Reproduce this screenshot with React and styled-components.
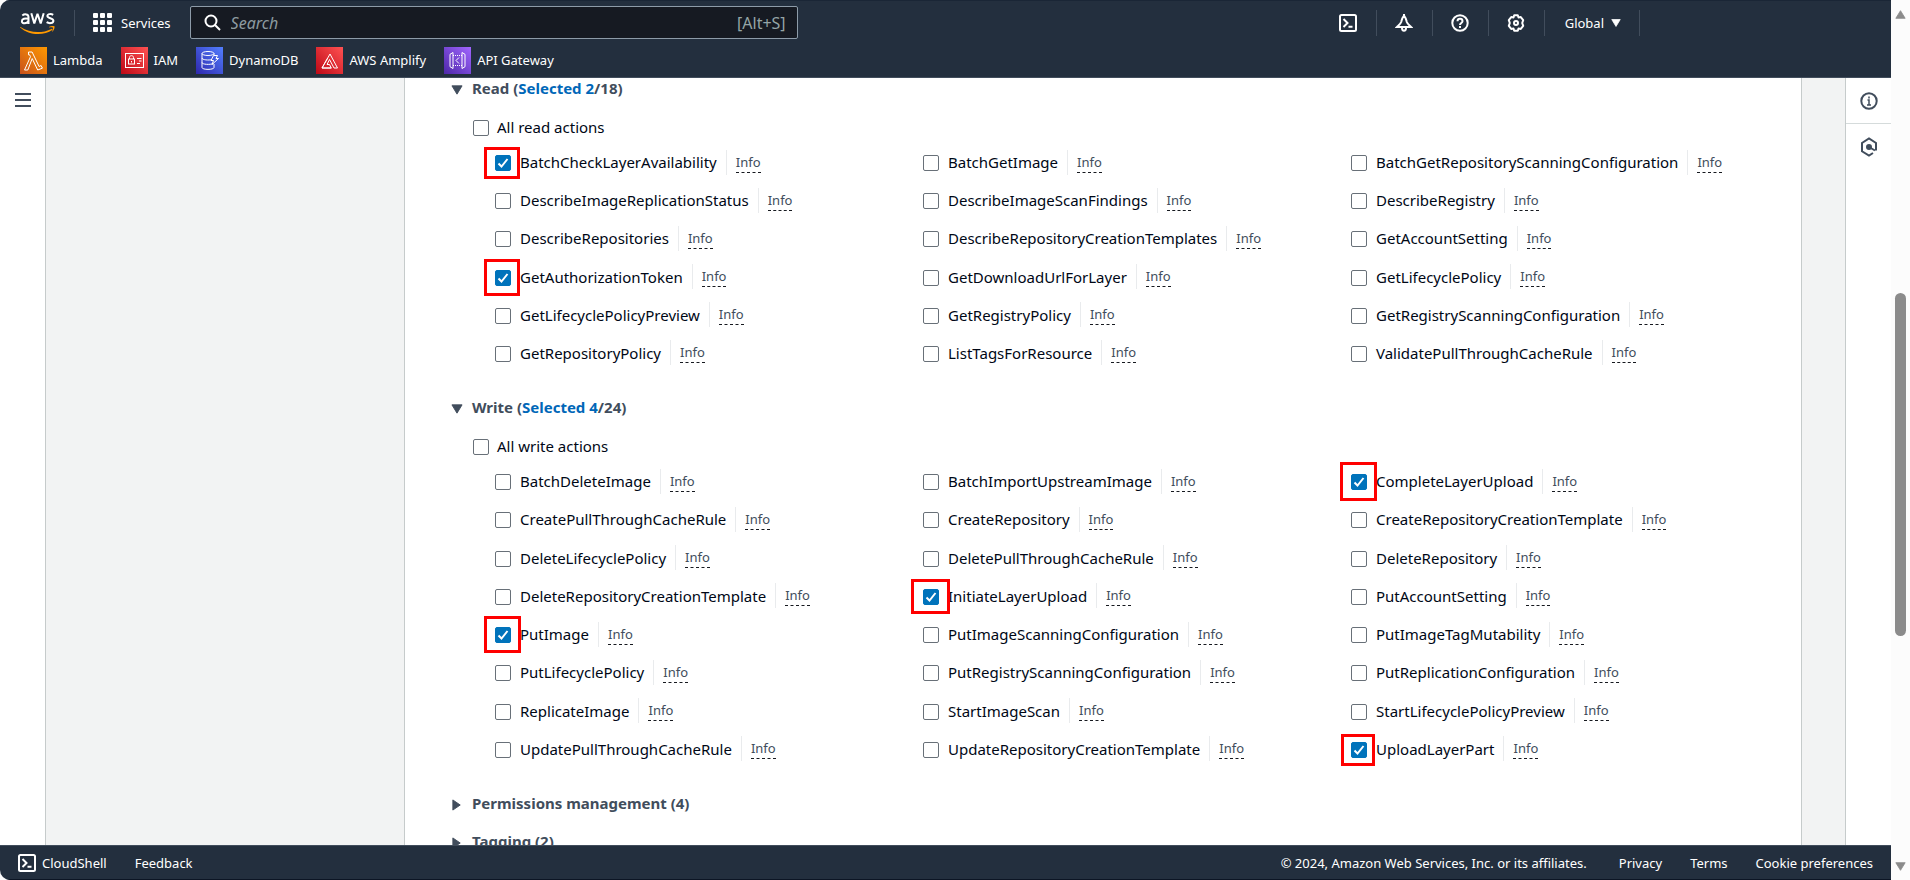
import React from "react";
import styled, { createGlobalStyle } from "styled-components";

const Global = createGlobalStyle`
  *, *::before, *::after { box-sizing: border-box; }
  body { margin: 0; background: #fdfdfd; font-family: "Noto Sans", "Open Sans", sans-serif; color: #000716; overflow: hidden; }
  button, input, a { font: inherit; color: inherit; }
  a { text-decoration: none; }
`;

const Window = styled.div`
  display: grid;
  grid-template-columns: minmax(0, 1fr) 19px;
  height: 100vh;
`;

const Page = styled.div`
  display: flex;
  flex-direction: column;
  min-width: 0;
  height: 100vh;
  border-radius: 10px 0 0 10px;
  overflow: hidden;
`;

const Header = styled.header`
  flex: none;
  height: 78px;
  background: #232f3e;
  color: #fff;
  border-top: 1px solid #1a2636;
  border-bottom: 1px solid #414d5c;
  display: flex;
  flex-direction: column;
`;

const TopBar = styled.div`
  display: flex;
  align-items: center;
  height: 43px;
  padding-left: 20px;
`;

const Divider = styled.span`
  width: 1px;
  height: 26px;
  background: #414d5c;
`;

const PlainButton = styled.button`
  display: flex;
  align-items: center;
  gap: 9px;
  padding: 0;
  border: 0;
  background: none;
  font-size: 13px;
  line-height: 20px;
  cursor: pointer;
`;

const LogoLink = styled.a`
  display: block;
  height: 24px;
  margin-right: 18px;
`;

const ServicesButton = styled(PlainButton)`
  margin: 0 19px 0 18px;
`;

const SearchBox = styled.label`
  display: flex;
  align-items: center;
  gap: 8px;
  width: 608px;
  height: 33px;
  padding: 0 11px 0 13px;
  background: #161a22;
  border: 1px solid #8d9ba8;
  border-radius: 2px;
  color: #95a5a6;
  font-size: 16px;
`;

const SearchInput = styled.input`
  flex: 1;
  min-width: 0;
  border: 0;
  outline: 0;
  background: none;
  &::placeholder { color: #8d9ba0; font-style: italic; opacity: 1; }
`;

const Tools = styled.div`
  display: flex;
  align-items: center;
  margin-left: auto;
  margin-right: 251px;
`;

const ToolButton = styled(PlainButton)`
  justify-content: center;
  width: 55px;
  height: 26px;
`;

const RegionButton = styled(PlainButton)`
  gap: 7px;
  padding: 0 18px 0 20px;
`;

const Favorites = styled.nav`
  display: flex;
  align-items: center;
  gap: 18px;
  padding-left: 20px;
  height: 32px;
`;

const Favorite = styled.a`
  display: flex;
  align-items: center;
  gap: 6px;
  font-size: 13px;
  line-height: 20px;
`;

const Body = styled.div`
  flex: 1;
  min-height: 0;
  display: grid;
  grid-template-columns: 46px minmax(0, 1fr) 46px;
  background: #f2f3f3;
`;

const LeftRail = styled.aside`
  background: #fff;
  border-right: 1px solid #c6cbcb;
  padding: 14px 0 0 15px;
`;

const RightRail = styled.aside`
  background: #fff;
  border-left: 1px solid #c6cbcb;
`;

const RailButton = styled(PlainButton)`
  justify-content: center;
  width: 100%;
  height: 46px;
  color: #414d5c;
  border-bottom: ${(p) => (p.$ruled ? "1px solid #d5dbdb" : "0")};
`;

const Panel = styled.main`
  margin: 0 43px 0 358px;
  padding: 0 46px;
  background: #fff;
  border: solid #c6cbcb;
  border-width: 0 1px;
  overflow: hidden;
`;

const Section = styled.section`
  padding-bottom: 25px;
`;

const SectionHeading = styled.h3`
  margin: 0;
  font-size: 15px;
  line-height: 20px;
  font-weight: 700;
  color: #414d5c;
`;

const Toggle = styled.button`
  display: flex;
  align-items: center;
  gap: 9px;
  padding: 0;
  border: 0;
  background: none;
  cursor: pointer;
  svg { margin-top: 3px; }
`;

const Selected = styled.span`
  color: #0067b8;
`;

const CheckLabel = styled.label`
  display: flex;
  align-items: center;
  gap: 9px;
  font-size: 15px;
  line-height: 20px;
`;

const AllActions = styled(CheckLabel)`
  padding: 19px 0 6px 22px;
  gap: 8px;
`;

const Checkbox = styled.input`
  appearance: none;
  flex: none;
  width: 16px;
  height: 16px;
  margin: 2px 0 0;
  border: 1px solid #687078;
  border-radius: 2px;
  background: #fff;
  &:checked {
    border-color: #0073bb;
    background: #0073bb url("data:image/svg+xml,%3Csvg xmlns='http://www.w3.org/2000/svg' viewBox='0 0 14 14'%3E%3Cpath d='M2.5 7.5l3 3 6-7.5' fill='none' stroke='white' stroke-width='2'/%3E%3C/svg%3E") center / 14px 14px no-repeat;
  }
`;

const ActionGrid = styled.ul`
  display: grid;
  grid-template-columns: repeat(3, 428px);
  grid-auto-rows: 1fr;
  min-height: ${(p) => p.$height}px;
  margin: 0;
  padding: 0 0 0 44px;
  list-style: none;
`;

const ActionItem = styled.li`
  position: relative;
  display: flex;
  align-items: center;
`;

const InfoCell = styled.span`
  display: flex;
  align-items: center;
  height: 25px;
  margin-left: 9px;
  padding-left: 9px;
  border-left: 1px solid #e9ebed;
`;

const InfoLink = styled.a`
  color: #414d5c;
  font-size: 13px;
  line-height: 20px;
  border-bottom: 1px dashed #16191f;
`;

const Highlight = styled.span`
  position: absolute;
  left: ${(p) => 7 - Math.floor(p.$w / 2)}px;
  top: ${(p) => 20 - Math.ceil(p.$h / 2)}px;
  width: ${(p) => p.$w}px;
  height: ${(p) => p.$h}px;
  border: 3px solid #f00;
  pointer-events: none;
`;

const Collapsed = styled.div`
  padding-bottom: 18px;
`;

const Footer = styled.footer`
  flex: none;
  height: 35px;
  display: flex;
  align-items: center;
  gap: 28px;
  padding: 0 18px;
  background: #232f3e;
  border-top: 1px solid #414d5c;
  border-bottom: 1px solid #0c1524;
  color: #fff;
  font-size: 13px;
  line-height: 20px;
`;

const FooterButton = styled(PlainButton)`
  gap: 6px;
`;

const Legal = styled.div`
  display: flex;
  gap: 28px;
  margin-left: auto;
`;

const Copyright = styled.span`
  margin-right: 4px;
`;

const ScrollTrack = styled.div`
  display: flex;
  flex-direction: column;
  align-items: center;
  background: #fcfcfc;
  padding: 9px 0 8px;
`;

const ScrollThumb = styled.div`
  width: 11px;
  height: 343px;
  margin-top: 273px;
  margin-bottom: auto;
  border-radius: 6px;
  background: #8b8b8b;
`;

function Caret({ dir = "down", color = "#414d5c", w = 12 }) {
  const d = { down: "M1 2h11L6.500 11z", right: "M2 1v11L10 6.500z", up: "M1 11h11L6.500 2z" }[dir];
  return (
    <svg width={w} height={w} viewBox="0 0 13 13" aria-hidden="true">
      <path d={d} fill={color} stroke={color} strokeLinejoin="round" />
    </svg>
  );
}

function AwsLogo() {
  return (
    <svg width="36" height="24" viewBox="0 0 36 24" role="img" aria-label="aws">
      <g fill="none" stroke="#fff" strokeWidth="2">
        <path d="M2.300 4.500c2-1.600 6.200-1.800 6.200 1.500v7M8.500 7.800C5 7 1.900 7.800 1.900 10.200c0 3 5.200 2.900 6.600-.6" />
        <path d="M11.300 2.200l3 10.200 3.200-9.600 3.200 9.600 3-10.200" strokeLinejoin="bevel" />
        <path d="M33.200 3.800c-1.900-1.100-5.800-1.100-5.800 1.200 0 2.700 6 1.700 6 4.700 0 2.900-4.400 3-6.800 1.500" />
      </g>
      <path d="M.5 16c9.500 6.500 22 6.400 31 1.900.9-.4 1.500.5.700 1.100C24.500 24.600 9.200 25 .2 16.500c-.4-.4 0-.8.3-.5z" fill="#f90" />
      <path d="M29 15.900c1.700-1.200 5-1.200 5.500-.6.400.7-.4 4.100-1.900 5.300-.3.200-.6.100-.5-.2.400-1 1.200-3.100.8-3.700-.5-.6-2.700-.4-3.700-.3-.3 0-.4-.3-.2-.5z" fill="#f90" />
    </svg>
  );
}

function GridIcon() {
  return (
    <svg width="19" height="19" viewBox="0 0 19 19" fill="#fff" aria-hidden="true">
      {[0, 7, 14].map((y) => [0, 7, 14].map((x) => <rect key={`${x}-${y}`} x={x} y={y} width="5" height="5" rx="1" />))}
    </svg>
  );
}

function ShellIcon({ size = 18 }) {
  return (
    <svg width={size} height={size} viewBox="0 0 18 18" fill="none" stroke="currentColor" strokeWidth="2" aria-hidden="true">
      <rect x="1" y="1" width="16" height="16" rx="1.500" />
      <path d="M4.500 5l4 4-4 4M9.500 12.700h4" />
    </svg>
  );
}

const toolIcons = {
  Notifications: <path d="M9 1.500C7 4 6.800 6 6.200 8 5.500 10 3.500 11.500 2 13h14c-1.500-1.500-3.500-3-4.200-5C11.200 6 11 4 9 1.500zM9 0v3M7 14c0 3.500 4 3.500 4 0" />,
  Help: (
    <>
      <circle cx="9" cy="9" r="7.700" />
      <path d="M6.500 7.200c0-3.200 5-3.200 5 0 0 1.800-2.500 1.800-2.500 3.800M9 12v2" />
    </>
  ),
  Settings: (
    <>
      <path d="M7.200 1.300h3.600l.7 2.200 2.300-.4 2.400 3-1 2.900 1 2.900-2.400 3-2.300-.4-.7 2.200H7.200l-.7-2.200-2.300.4-2.400-3 1-2.900-1-2.900 2.400-3 2.300.4z" strokeLinejoin="round" />
      <circle cx="9" cy="9" r="2" />
    </>
  ),
};

const art = {
  lambda: <path d="M8.500 5h3.600l7 14.500 2-1 1.300 2.700-4.700 1.800-5.500-11.500L7.800 23H4.500l6-13.300-.9-1.900H8.500z" />,
  iam: (
    <>
      <rect x="4.500" y="6.500" width="18" height="14" />
      <rect x="7.500" y="12" width="6" height="5" />
      <path d="M8.500 12v-1.500c0-2.500 4-2.500 4 0V12M10.500 14v1.500M16 11.500h4.500M18 14h2.500M16 16.500h3" />
    </>
  ),
  dynamo: (
    <>
      <ellipse cx="12" cy="6.500" rx="6" ry="2" />
      <path d="M6 6.500v14c0 2.500 12 2.500 12 0V17M6 11c0 2 7 2.500 10 1.500M6 15.500c0 2 8 2.500 11.500 1M18 6.500V8M17.500 8.500h4l-1.500 3h2.500l-6.500 6 1.500-4h-2.500z" />
    </>
  ),
  amplify: <path d="M6 21l8-14 7.500 14H18L13.500 12.500 11 17.500h2.500l1.700 3.500zM11.700 11L6 21h9.500" />,
  api: (
    <>
      <path d="M9 5.500v16l-3-1.800V7.300zM18 5.500v16l3-1.800V7.300zM15 10.500L12 13.500l3 3" />
      <path d="M9 8.500h9M9 18.500h9" strokeDasharray="1 1" />
    </>
  ),
};

function ServiceIcon({ name, from, to }) {
  return (
    <svg width="27" height="27" viewBox="0 0 27 27" aria-hidden="true">
      <defs>
        <linearGradient id={name} x1="0" y1="1" x2="1" y2="0">
          <stop offset="0" stopColor={from} />
          <stop offset="1" stopColor={to} />
        </linearGradient>
      </defs>
      <rect width="27" height="27" fill={`url(#${name})`} />
      <g fill="none" stroke="#fff" strokeWidth="1">{art[name]}</g>
    </svg>
  );
}

const favorites = [
  ["lambda", "Lambda", "#c8511b", "#ff9900"],
  ["iam", "IAM", "#bd0816", "#ff5252"],
  ["dynamo", "DynamoDB", "#2e27ad", "#527fff"],
  ["amplify", "AWS Amplify", "#bd0816", "#ff5252"],
  ["api", "API Gateway", "#4d27a8", "#a166ff"],
];

const readActions = [
  "BatchCheckLayerAvailability", "BatchGetImage", "BatchGetRepositoryScanningConfiguration",
  "DescribeImageReplicationStatus", "DescribeImageScanFindings", "DescribeRegistry",
  "DescribeRepositories", "DescribeRepositoryCreationTemplates", "GetAccountSetting",
  "GetAuthorizationToken", "GetDownloadUrlForLayer", "GetLifecyclePolicy",
  "GetLifecyclePolicyPreview", "GetRegistryPolicy", "GetRegistryScanningConfiguration",
  "GetRepositoryPolicy", "ListTagsForResource", "ValidatePullThroughCacheRule",
];

const writeActions = [
  "BatchDeleteImage", "BatchImportUpstreamImage", "CompleteLayerUpload",
  "CreatePullThroughCacheRule", "CreateRepository", "CreateRepositoryCreationTemplate",
  "DeleteLifecyclePolicy", "DeletePullThroughCacheRule", "DeleteRepository",
  "DeleteRepositoryCreationTemplate", "InitiateLayerUpload", "PutAccountSetting",
  "PutImage", "PutImageScanningConfiguration", "PutImageTagMutability",
  "PutLifecyclePolicy", "PutRegistryScanningConfiguration", "PutReplicationConfiguration",
  "ReplicateImage", "StartImageScan", "StartLifecyclePolicyPreview",
  "UpdatePullThroughCacheRule", "UpdateRepositoryCreationTemplate", "UploadLayerPart",
];

/* Width and height of the frame drawn round each chosen tick box. */
const chosen = {
  BatchCheckLayerAvailability: [36, 32],
  GetAuthorizationToken: [36, 37],
  CompleteLayerUpload: [37, 39],
  InitiateLayerUpload: [39, 35],
  PutImage: [37, 37],
  UploadLayerPart: [34, 32],
};

function ActionSection({ title, selected, total, all, actions, height }) {
  return (
    <Section>
      <SectionHeading>
        <Toggle aria-expanded="true">
          <Caret />
          <span>{title} (<Selected>Selected {selected}</Selected>/{total})</span>
        </Toggle>
      </SectionHeading>
      <AllActions><Checkbox type="checkbox" />{all}</AllActions>
      <ActionGrid $height={height}>
        {actions.map((name) => (
          <ActionItem key={name}>
            <CheckLabel>
              <Checkbox type="checkbox" defaultChecked={name in chosen} />
              {name}
            </CheckLabel>
            <InfoCell><InfoLink href="#info">Info</InfoLink></InfoCell>
            {name in chosen && <Highlight $w={chosen[name][0]} $h={chosen[name][1]} />}
          </ActionItem>
        ))}
      </ActionGrid>
    </Section>
  );
}

export default function App() {
  return (
    <>
      <Global />
      <Window>
        <Page>
          <Header>
            <TopBar>
              <LogoLink href="#home"><AwsLogo /></LogoLink>
              <Divider />
              <ServicesButton><GridIcon />Services</ServicesButton>
              <SearchBox>
                <svg width="17" height="17" viewBox="0 0 17 17" fill="none" stroke="#fff" strokeWidth="2" aria-hidden="true">
                  <circle cx="7" cy="7" r="5.500" />
                  <path d="M11 11l5 5" />
                </svg>
                <SearchInput type="search" placeholder="Search" aria-label="Search" />
                [Alt+S]
              </SearchBox>
              <Tools>
                <ToolButton aria-label="CloudShell"><ShellIcon /></ToolButton>
                {Object.entries(toolIcons).map(([name, icon]) => (
                  <React.Fragment key={name}>
                    <Divider />
                    <ToolButton aria-label={name}>
                      <svg width="18" height="18" viewBox="0 0 18 18" fill="none" stroke="#fff" strokeWidth="2" aria-hidden="true">{icon}</svg>
                    </ToolButton>
                  </React.Fragment>
                ))}
                <Divider />
                <RegionButton>Global<Caret color="#fff" w={10} /></RegionButton>
                <Divider />
              </Tools>
            </TopBar>
            <Favorites>
              {favorites.map(([id, label, from, to]) => (
                <Favorite key={id} href={`#${id}`}><ServiceIcon name={id} from={from} to={to} />{label}</Favorite>
              ))}
            </Favorites>
          </Header>
          <Body>
            <LeftRail>
              <PlainButton aria-label="Open navigation">
                <svg width="16" height="16" viewBox="0 0 16 16" stroke="#414d5c" strokeWidth="2" aria-hidden="true">
                  <path d="M0 2h16M0 8h16M0 14h16" />
                </svg>
              </PlainButton>
            </LeftRail>
            <Panel>
              <ActionSection title="Read" selected={2} total={18} all="All read actions" actions={readActions} height={229} />
              <ActionSection title="Write" selected={4} total={24} all="All write actions" actions={writeActions} height={306} />
              {["Permissions management (4)", "Tagging (2)"].map((t) => (
                <Collapsed key={t}>
                  <SectionHeading><Toggle aria-expanded="false"><Caret dir="right" />{t}</Toggle></SectionHeading>
                </Collapsed>
              ))}
            </Panel>
            <RightRail>
              <RailButton $ruled aria-label="Info panel">
                <svg width="18" height="18" viewBox="0 0 18 18" fill="none" stroke="currentColor" strokeWidth="2" aria-hidden="true">
                  <circle cx="9" cy="9" r="7.700" />
                  <path d="M9 4.500v2M7.500 8H9v5M7 13h4" strokeWidth="1.500" />
                </svg>
              </RailButton>
              <RailButton aria-label="Diagnostics">
                <svg width="18" height="20" viewBox="0 0 18 20" fill="none" stroke="currentColor" strokeWidth="2" aria-hidden="true">
                  <path d="M13 16l-4 2.500-7-4.200V6L9 1.500 16 6v7.500" />
                  <circle cx="9" cy="10" r="2" fill="currentColor" />
                  <path d="M9 10l6 3.500" />
                </svg>
              </RailButton>
            </RightRail>
          </Body>
          <Footer>
            <FooterButton><ShellIcon />CloudShell</FooterButton>
            <FooterButton>Feedback</FooterButton>
            <Legal>
              <Copyright>© 2024, Amazon Web Services, Inc. or its affiliates.</Copyright>
              <a href="#privacy">Privacy</a>
              <a href="#terms">Terms</a>
              <a href="#cookies">Cookie preferences</a>
            </Legal>
          </Footer>
        </Page>
        <ScrollTrack>
          <Caret dir="up" color="#8b8b8b" w={11} />
          <ScrollThumb />
          <Caret color="#8b8b8b" w={11} />
        </ScrollTrack>
      </Window>
    </>
  );
}
